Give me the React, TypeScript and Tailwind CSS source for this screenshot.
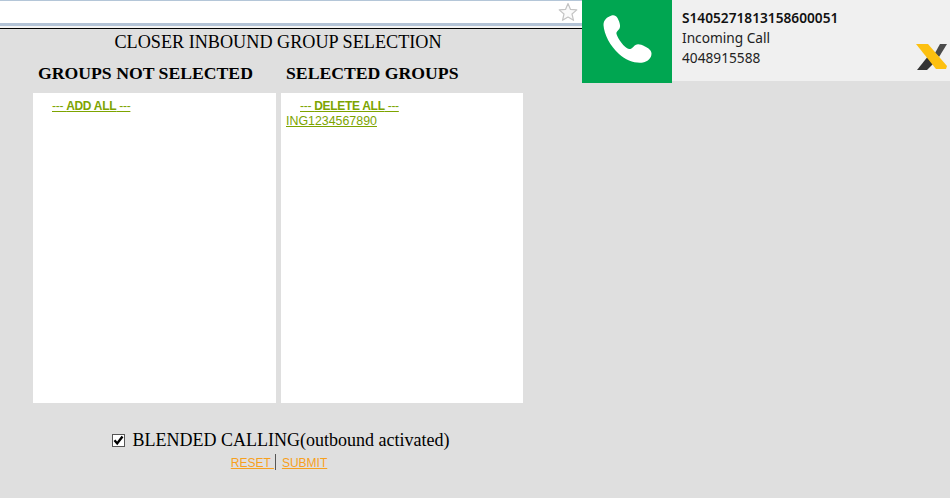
export default function App() {
  return (
    <div className="relative w-[950px] h-[498px] overflow-hidden bg-[#dfdfdf] font-['Liberation_Serif',serif] text-black">
      {/* browser bar */}
      <div className="h-[30px] flex flex-col">
        <div className="h-px bg-[#b4c6d8]" />
        <div className="h-[22px] bg-white flex justify-end pr-[372px] items-start">
          <svg width="20" height="20" viewBox="0 0 20 20" className="mt-[1px]">
            <path d="M10 1.5 L12.5 7.4 L18.8 7.9 L14 12 L15.5 18.3 L10 15 L4.5 18.3 L6 12 L1.2 7.9 L7.5 7.4 Z" fill="#fafafa" stroke="#c4c4c4" strokeWidth="1.2" strokeLinejoin="round" />
          </svg>
        </div>
        <div className="h-[3px] bg-[#b3c3d6]" />
        <div className="h-[2px] bg-[#f4f4f4]" />
        <div className="h-px bg-black" />
        <div className="h-px bg-[#dfdfdf]" />
      </div>

      {/* notification */}
      <div className="absolute right-0 top-0 w-[368px] flex items-start">
        <div className="w-[90px] h-[83px] bg-[#00a651] flex items-center justify-center">
          <svg width="50" height="50" viewBox="0 0 50 50" className="-mt-[6px]">
            <path d="M9.5 1.5 C5 3 1.5 6 1.5 11 C2 20 8 32 17 40 C24 46.5 33 49.5 41 48.5 C46 47.5 49.5 44 49.5 39.5 C49.5 36.5 47 34.5 43 32.5 C39 30.5 36 29.5 33.5 31 C31 32.5 30 35.5 27 35 C22 33.5 16 25 14.5 20 C14 17.5 16.5 16.5 17.5 14.5 C19 11.5 17 7 15.5 4 C14 1.5 12 0.8 9.5 1.5 Z" fill="#ffffff" />
          </svg>
        </div>
        <div className="relative flex-1 h-[81px] bg-[#f0f0f0] pl-[10px] pt-[8px] font-['Noto_Sans',sans-serif] text-[13.7px] leading-[20px] text-[#222]">
          <div className="font-semibold text-[#111]">S1405271813158600051</div>
          <div>Incoming Call</div>
          <div>4048915588</div>
          <svg width="32" height="28" viewBox="0 0 32 28" className="absolute right-[2px] bottom-[10px]">
            <path d="M1 27 L13 12 L19 19 L11 27 Z" fill="#333333" />
            <path d="M19 10 L24 1 L31 1 L23 14 Z" fill="#4a4a4a" />
            <path d="M0 1 L12 1 L31 23 L30 26 L20 26 Z" fill="#fdc010" />
          </svg>
        </div>
      </div>

      {/* main form */}
      <div className="ml-[33px] w-[490px]">
        <div className="text-center text-[18.2px] leading-[21px] mt-[2px]">CLOSER INBOUND GROUP SELECTION</div>
        <div className="flex gap-[5px] mt-[10px] text-[17.7px] leading-[21px] font-bold">
          <div className="w-[243px] pl-[5px]">GROUPS NOT SELECTED</div>
          <div className="w-[242px] pl-[5px]">SELECTED GROUPS</div>
        </div>
        <div className="flex gap-[5px] mt-[9px] font-['Liberation_Sans',sans-serif] text-[12px] leading-[14px] text-[#7da400]">
          <div className="w-[243px] h-[310px] bg-white pt-[6px] pl-[19px]">
            <a className="underline tracking-[-0.3px]"><span>--- </span><b>ADD ALL</b><span> ---</span></a>
          </div>
          <div className="w-[242px] h-[310px] bg-white pt-[6px] pl-[5px]">
            <div className="pl-[14px]">
              <a className="underline tracking-[-0.3px]"><span>--- </span><b>DELETE ALL</b><span> ---</span></a>
            </div>
            <a className="underline text-[12.4px] block mt-[1px]">ING1234567890</a>
          </div>
        </div>
        <div className="flex items-center justify-center gap-[8px] mt-[27px] text-[18px] leading-[21px] pl-[5px]">
          <span className="relative w-[13px] h-[13px] border border-[#555] bg-white flex items-center justify-center">
            <input type="checkbox" defaultChecked className="absolute inset-0 opacity-0 m-0" />
            <svg width="11" height="11" viewBox="0 0 11 11">
              <path d="M1.5 5.2 L4.2 8.4 L9.5 1.5" fill="none" stroke="#000" strokeWidth="2.4" />
            </svg>
          </span>
          <span>BLENDED CALLING(outbound activated)</span>
        </div>
        <div className="flex justify-center mt-[5px] font-['Liberation_Sans',sans-serif] text-[12px] leading-[14px] text-[#f7a01d] pl-[2px]">
          <a className="underline whitespace-pre">RESET </a>
          <span className="w-px h-[16px] -mt-[2px] bg-[#555] ml-px mr-[6px]" />
          <a className="underline">SUBMIT</a>
        </div>
      </div>
    </div>
  );
}
